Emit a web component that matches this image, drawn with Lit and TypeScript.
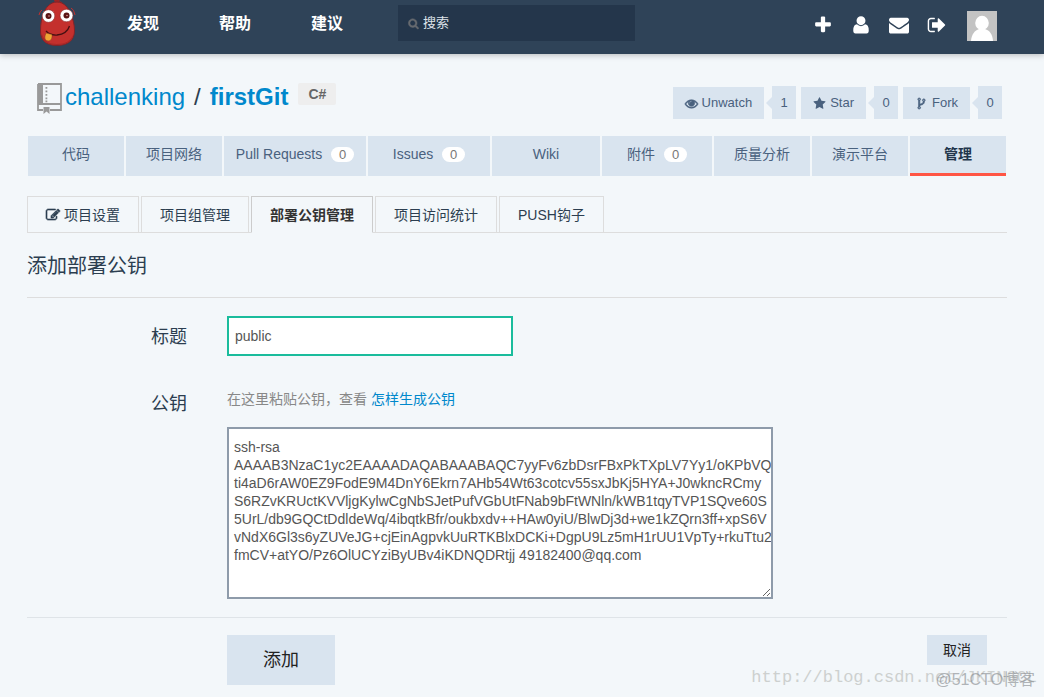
import { LitElement, html, css, svg } from "lit";
import { customElement, property, state } from "lit/decorators.js";
import { classMap } from "lit/directives/class-map.js";

const ICONS: Record<string, string> = {
  plus: "M1600 736v192q0 40-28 68t-68 28h-416v416q0 40-28 68t-68 28h-192q-40 0-68-28t-28-68v-416h-416q-40 0-68-28t-28-68v-192q0-40 28-68t68-28h416v-416q0-40 28-68t68-28h192q40 0 68 28t28 68v416h416q40 0 68 28t28 68z",
  user: "M1590 1399q0 255-200 255h-988q-200 0-200-255 0-300 90-440 80-112 240-122 150 160 364 160t364-160q160 10 240 122 90 140 90 440zM1296 512a400 400 0 0 1-800 0a400 400 0 0 1 800 0z",
  envelope: "M1792 710v794q0 66-47 113t-113 47h-1472q-66 0-113-47t-47-113v-794q44 49 101 87 362 246 497 345 57 42 92.5 65.5t94.5 48 110 24.5h2q51 0 110-24.5t94.5-48 92.5-65.5q170-123 498-345 57-39 100-87zm0-294q0 79-49 151t-122 123q-376 261-468 325-10 7-42.5 31t-54 38.5-52 32.5-57.5 27-50 9h-2q-23 0-50-9t-57.5-27-52-32.5-54-38.5-42.5-31q-91-64-262-182.5t-205-142.5q-62-42-117-115.5t-55-136.5q0-78 41.5-130t118.5-52h1472q65 0 112.5 47t47.5 113z",
  signOut: "M704 1440q0 4 1 20t.5 26.5-3 23.5-10 19.5-20.5 6.5h-320q-119 0-203.5-84.5t-84.5-203.5v-704q0-119 84.5-203.5t203.5-84.5h320q13 0 22.5 9.5t9.5 22.5q0 4 1 20t.5 26.5-3 23.5-10 19.5-20.5 6.5h-320q-66 0-113 47t-47 113v704q0 66 47 113t113 47h312l11.5 1 11.5 3 8 5.5 7 9 2 13.5zm928-544q0 26-19 45l-544 544q-19 19-45 19t-45-19-19-45v-288h-448q-26 0-45-19t-19-45v-384q0-26 19-45t45-19h448v-288q0-26 19-45t45-19 45 19l544 544q19 19 19 45z",
  star: "M1728 647q0 22-26 48l-363 354 86 500q1 7 1 20 0 21-10.5 35.5t-30.5 14.5q-19 0-40-12l-449-236-449 236q-22 12-40 12-21 0-31.5-14.5t-10.5-35.5q0-6 2-20l86-500-364-354q-25-27-25-48 0-37 56-46l502-73 225-455q19-41 49-41t49 41l225 455 502 73q56 9 56 46z",
  search: "M1216 832q0-185-131.5-316.5t-316.5-131.5-316.5 131.5-131.5 316.5 131.5 316.5 316.5 131.5 316.5-131.5 131.5-316.5zm512 832q0 52-38 90t-90 38q-54 0-90-38l-343-342q-179 124-399 124-143 0-273.5-55.5t-225-150-150-225-55.5-273.5 55.5-273.5 150-225 225-150 273.5-55.5 273.5 55.5 225 150 150 225 55.5 273.5q0 220-124 399l343 343q37 37 37 90z",
  eye: "M1664 960q-152-236-381-353 61 104 61 225 0 185-131.5 316.5t-316.5 131.5-316.5-131.5-131.5-316.5q0-121 61-225-229 117-381 353 133 205 333.5 326.5t434.5 121.5 434.5-121.5 333.5-326.5zm-720-384q0-20-14-34t-34-14q-125 0-214.5 89.5t-89.5 214.5q0 20 14 34t34 14 34-14 14-34q0-86 61-147t147-61q20 0 34-14t14-34zm848 384q0 34-20 69-140 230-376.5 368.5t-499.5 138.5-499.5-139-376.5-368q-20-35-20-69t20-69q140-229 376.5-368t499.5-139 499.5 139 376.5 368q20 35 20 69z",
  fork: "M672 1472q0-40-28-68t-68-28-68 28-28 68 28 68 68 28 68-28 28-68zm0-1152q0-40-28-68t-68-28-68 28-28 68 28 68 68 28 68-28 28-68zm640 128q0-40-28-68t-68-28-68 28-28 68 28 68 68 28 68-28 28-68zm96 0q0 52-26 96.5t-70 69.5q-2 287-226 414-67 38-203 81-128 40-169.5 71t-41.5 100v26q44 25 70 69.5t26 96.5q0 80-56 136t-136 56-136-56-56-136q0-52 26-96.5t70-69.5v-820q-44-25-70-69.5t-26-96.5q0-80 56-136t136-56 136 56 56 136q0 52-26 96.5t-70 69.5v497q54-26 154-57 55-17 87.5-29.5t70.5-31 59-39.5 40.5-51 28-69.5 8.5-91.5q-44-25-70-69.5t-26-96.5q0-80 56-136t136-56 136 56 56 136z",
  edit: "M888 1184l116-116-152-152-116 116v56h96v96h56zm440-720q-16-16-33 1l-350 350q-17 17-1 33t33-1l350-350q17-17 1-33zm80 594v190q0 119-84.5 203.5t-203.5 84.5h-832q-119 0-203.5-84.5t-84.5-203.5v-832q0-119 84.5-203.5t203.5-84.5h832q63 0 117 25 15 7 18 23 3 17-9 29l-49 49q-14 14-32 8-23-6-45-6h-832q-66 0-113 47t-47 113v832q0 66 47 113t113 47h832q66 0 113-47t47-113v-126q0-13 9-22l64-64q15-15 35-7t20 29zm-96-738l288 288-672 672h-288v-288zm444 132l-92 92-288-288 92-92q28-28 68-28t68 28l152 152q28 28 28 68t-28 68z",
};

@customElement("fa-icon")
class FaIcon extends LitElement {
  @property() name = "";
  static styles = css`
    :host { display: inline-block; width: 14px; height: 14px; flex: none; }
    svg { display: block; width: 100%; height: 100%; fill: currentColor; overflow: visible; }
    :host([heavy]) path { stroke: currentColor; stroke-width: 80; }
  `;
  render() {
    return html`<svg viewBox="0 0 1792 1792" aria-hidden="true">${svg`<path d=${ICONS[this.name]}></path>`}</svg>`;
  }
}

const NAV = ["发现", "帮助", "建议"];
const ACTIONS = [
  { icon: "eye", label: "Unwatch", count: 1 },
  { icon: "star", label: "Star", count: 0 },
  { icon: "fork", label: "Fork", count: 0 },
];
const TABS: { label: string; count?: number; active?: boolean }[] = [
  { label: "代码" },
  { label: "项目网络" },
  { label: "Pull Requests", count: 0 },
  { label: "Issues", count: 0 },
  { label: "Wiki" },
  { label: "附件", count: 0 },
  { label: "质量分析" },
  { label: "演示平台" },
  { label: "管理", active: true },
];
const SUBTABS: { label: string; icon?: string; active?: boolean }[] = [
  { label: "项目设置", icon: "edit" },
  { label: "项目组管理" },
  { label: "部署公钥管理", active: true },
  { label: "项目访问统计" },
  { label: "PUSH钩子" },
];
const KEY = [
  "ssh-rsa",
  "AAAAB3NzaC1yc2EAAAADAQABAAABAQC7yyFv6zbDsrFBxPkTXpLV7Yy1/oKPbVQ",
  "ti4aD6rAW0EZ9FodE9M4DnY6Ekrn7AHb54Wt63cotcv55sxJbKj5HYA+J0wkncRCmy",
  "S6RZvKRUctKVVljgKylwCgNbSJetPufVGbUtFNab9bFtWNln/kWB1tqyTVP1SQve60S",
  "5UrL/db9GQCtDdldeWq/4ibqtkBfr/oukbxdv++HAw0yiU/BlwDj3d+we1kZQrn3ff+xpS6V",
  "vNdX6Gl3s6yZUVeJG+cjEinAgpvkUuRTKBlxDCKi+DgpU9Lz5mH1rUU1VpTy+rkuTtu2",
  "fmCV+atYO/Pz6OlUCYziByUBv4iKDNQDRtjj 49182400@qq.com",
].join("\n");

@customElement("app-root")
class AppRoot extends LitElement {
  @state() keyTitle = "public";

  static styles = css`
    :host {
      display: block;
      position: relative;
      min-height: 100vh;
      background: #f3f7fa;
      color: #2c3e50;
      font: 14px/20px "Liberation Sans", "Noto Sans CJK SC", sans-serif;
    }
    * { box-sizing: border-box; }
    a { color: inherit; text-decoration: none; }
    input, textarea, button { font: inherit; color: inherit; border-radius: 0; margin: 0; }

    .top {
      display: flex;
      height: 54px;
      padding: 0 47px 0 37px;
      background: #2f4358;
      box-shadow: 0 1px 6px rgba(0, 0, 0, 0.25);
      color: #fff;
    }
    .logo { width: 40px; height: 48px; display: block; }
    .nav { display: flex; gap: 60px; margin: 14px 55px 0 50px; font-size: 16px; font-weight: bold; }
    .search {
      flex: 0 1 237px;
      height: 36px;
      margin-top: 5px;
      padding-left: 10px;
      display: flex;
      align-items: center;
      gap: 3px;
      background: #24364b;
    }
    .search fa-icon { width: 11px; height: 11px; margin-right: 1px; color: #666a70; }
    .search input { flex: 1; min-width: 0; border: 0; padding: 0; background: none; outline: none; font-size: 13px; }
    .search input::placeholder { color: #dde3e9; opacity: 1; }
    .tools { display: flex; gap: 18px; margin: 15px 0 0 auto; }
    .tools fa-icon { display: block; width: 20px; height: 20px; }
    .avatar { display: block; width: 30px; height: 30px; margin: 11px 0 0 20px; }

    .page { padding: 32px 37px 12px 27px; }
    .head { display: flex; align-items: flex-start; height: 50px; padding: 0 5px 0 10px; }
    .book { width: 25px; height: 32px; margin-top: -4px; flex: none; }
    .repo { display: flex; gap: 9px; margin: -5px 0 0 3px; font-size: 24px; line-height: 32px; font-weight: normal; white-space: nowrap; }
    .repo a { color: #0088cc; }
    .repo .own { font-weight: bold; }
    .lang { margin: -3px 0 0 10px; padding: 0 10px; line-height: 22px; font-size: 14px; font-weight: bold; color: #666; background: #eee; border-radius: 2px; }
    .actions { display: flex; gap: 5px; margin-left: auto; font-size: 13px; color: #49617e; }
    .action { display: flex; align-items: flex-end; }
    .act { display: flex; align-items: center; gap: 4px; height: 32px; padding: 0 12px; border: 0; background: #d9e4ef; }
    .act fa-icon { width: 13px; height: 13px; }
    .arrow { width: 0; height: 0; margin: 0 0 10px 2px; border: 6px solid transparent; border-right-color: #d9e4ef; border-left: 0; }
    .num { width: 24px; line-height: 33px; text-align: center; background: #d9e4ef; }

    .tabs {
      display: grid;
      grid-template-columns: 96fr 96fr 142fr 122fr 108fr 110fr 96fr 96fr 96fr;
      gap: 2px;
      padding: 0 1px;
      color: #49617e;
    }
    .tab { display: flex; align-items: center; justify-content: center; gap: 9px; height: 40px; padding-bottom: 4px; background: #d9e4ef; white-space: nowrap; }
    .tab.active { padding-bottom: 1px; border-bottom: 3px solid #ff5544; color: #22364c; font-weight: bold; }
    .pill { width: 23px; line-height: 15px; border-radius: 8px; text-align: center; background: #fff; color: #777; font-size: 13px; }

    .subtabs { display: flex; gap: 2px; margin-top: 20px; box-shadow: inset 0 -1px #dddddd; }
    .sub { display: flex; align-items: center; gap: 4px; height: 37px; padding: 0 18px; border: 1px solid #dddddd; white-space: nowrap; }
    .sub.active { border-color: #cccccc; border-bottom-color: #f3f7fa; color: #333; font-weight: bold; }

    h2 { margin: 0; padding: 18px 0 15px; font-size: 20px; line-height: 31px; font-weight: normal; border-bottom: 1px solid #dddddd; }
    .row { display: grid; grid-template-columns: 160px minmax(0, 1fr); column-gap: 40px; }
    .row label { font-size: 18px; line-height: 42px; text-align: right; }
    .title-row { padding: 18px 0 28px; }
    .title-row input { width: 286px; height: 40px; padding: 0 6px; border: 2px solid #1abc9c; background: #fff; color: #555; outline: none; }
    .key-row { padding-bottom: 18px; border-bottom: 1px solid #dfe4e8; }
    .key-row label { line-height: 36px; }
    .hint { margin: 3px 0 18px; color: #888; }
    .hint a { color: #0088cc; }
    textarea {
      display: block;
      width: 546px;
      max-width: 100%;
      height: 172px;
      padding: 9px 0 9px 5px;
      border: 2px solid #8e9baa;
      background: #fff;
      color: #555;
      line-height: 18px;
      white-space: pre;
      overflow: hidden;
      resize: both;
      outline: none;
    }
    .foot { display: flex; align-items: flex-start; justify-content: space-between; padding: 17px 20px 0 200px; }
    .foot button { border: 0; background: #d9e4ef; color: #222; }
    .foot .add { width: 108px; height: 50px; font-size: 18px; }
    .foot .cancel { width: 60px; height: 30px; }
    .mark { position: absolute; white-space: nowrap; pointer-events: none; }
    .mark.url { right: 7px; bottom: 9px; font-family: "Liberation Mono", monospace; font-size: 17px; line-height: 20px; color: #cdd0cf; }
    .mark.site { right: 9px; bottom: 7px; font-size: 16px; color: rgba(130, 134, 138, 0.6); }
  `;

  render() {
    return html`
      <header class="top">
        <a href="#" aria-label="首页">
          <svg class="logo" viewBox="0 0 40 48">
            <path d="M19.500 5 L19 1 L17.500 0 M21 5 L21.500 0 M22 5 L24.500 2" stroke="#9e2524" stroke-width="2.500" fill="none" />
            <path d="M20 2 C27 2 32 8 34 15 C36 19 37.500 24 37.500 31 C37.500 40 31 45.500 20 45.500 C9 45.500 3.500 40 3.500 31 C3.500 24 4.500 19 6 15 C8 8 13 2 20 2Z" fill="#c4302d" stroke="#7f2429" stroke-width="1" />
            <path d="M5 34 C7 41 12 44 20 44 C28 44 34 41 36.500 34 C36 41 30 45 20 45 C10 45 4 41 5 34Z" fill="#a92827" />
            <path d="M2 15 Q3 11 5 10 M38 15 Q37 9 34 8" stroke="#c4302d" stroke-width="1" fill="none" />
            <ellipse cx="11.500" cy="16" rx="6.300" ry="6.300" fill="#fff" stroke="#8b2a2a" stroke-width=".6" />
            <ellipse cx="29.500" cy="15.500" rx="6.500" ry="6.300" fill="#fff" stroke="#8b2a2a" stroke-width=".6" />
            <circle cx="11.500" cy="16" r="3" fill="#5a1515" /><circle cx="29.500" cy="15.500" r="3" fill="#5a1515" />
            <circle cx="12" cy="16" r=".8" fill="#d99" /><circle cx="30" cy="15.500" r=".8" fill="#d99" />
            <path d="M9 31 Q13 35.500 20 35 Q30 34 32.500 26" stroke="#461012" stroke-width="1.300" fill="none" />
            <path d="M9 33 L15 34.500 Q15.500 40 12 41 Q7 41 8 36Z" fill="#efa535" stroke="#8a3c1c" stroke-width=".5" />
          </svg>
        </a>
        <nav class="nav">${NAV.map((n) => html`<a href="#">${n}</a>`)}</nav>
        <div class="search">
          <fa-icon name="search" heavy></fa-icon>
          <input type="search" placeholder="搜索" aria-label="搜索" />
        </div>
        <div class="tools">
          ${[["plus", "新建"], ["user", "用户"], ["envelope", "消息"], ["signOut", "退出"]].map(
            ([i, t]) => html`<a href="#" aria-label=${t}><fa-icon name=${i}></fa-icon></a>`
          )}
        </div>
        <a href="#" aria-label="头像">
          <svg class="avatar" viewBox="0 0 30 30">
            <rect width="30" height="30" fill="#c3c3c3" />
            <ellipse cx="15" cy="12" rx="6.800" ry="7.200" fill="#fff" />
            <path d="M4 30 C4.500 23 8 19.500 12 18 H18 C22.500 19.500 25.500 23 26 30Z" fill="#fff" />
          </svg>
        </a>
      </header>
      <main class="page">
        <div class="head">
          <svg class="book" viewBox="0 0 25 32" aria-hidden="true">
            <path d="M1 2H24V28H13M6 28H1V2M1 22H24" fill="none" stroke="#999" stroke-width="1.800" />
            <path d="M1 2H6V22H1ZM6.500 25H12.500V32L9.500 29.500L6.500 32Z" fill="#999" />
            <path d="M8.500 5h1.800v1.800h-1.800zM8.500 8.500h1.800v1.800h-1.800zM8.500 12h1.800v1.800h-1.800zM8.500 15.500h1.800v1.800h-1.800zM8.500 18.500h1.800v1.800h-1.800z" fill="#999" />
          </svg>
          <div class="repo"><a href="#">challenking</a><span>/</span><a class="own" href="#">firstGit</a></div>
          <span class="lang">C#</span>
          <div class="actions">
            ${ACTIONS.map(
              (a) => html`<div class="action">
                <button class="act"><fa-icon name=${a.icon} ?heavy=${a.icon !== "star"}></fa-icon>${a.label}</button>
                <span class="arrow"></span>
                <a class="num" href="#">${a.count}</a>
              </div>`
            )}
          </div>
        </div>
        <nav class="tabs">
          ${TABS.map(
            (t) => html`<a href="#" class=${classMap({ tab: true, active: !!t.active })}
              ><span>${t.label}</span>${t.count !== undefined ? html`<span class="pill">${t.count}</span>` : ""}</a>`
          )}
        </nav>
        <nav class="subtabs">
          ${SUBTABS.map(
            (t) => html`<a href="#" class=${classMap({ sub: true, active: !!t.active })}
              >${t.icon ? html`<fa-icon name=${t.icon} heavy></fa-icon>` : ""}<span>${t.label}</span></a>`
          )}
        </nav>
        <h2>添加部署公钥</h2>
        <form @submit=${(e: Event) => e.preventDefault()}>
          <div class="row title-row">
            <label for="title">标题</label>
            <input id="title" type="text" .value=${this.keyTitle}
              @input=${(e: Event) => (this.keyTitle = (e.target as HTMLInputElement).value)} />
          </div>
          <div class="row key-row">
            <label for="key">公钥</label>
            <div>
              <p class="hint">在这里粘贴公钥，查看 <a href="#">怎样生成公钥</a></p>
              <textarea id="key" spellcheck="false" .value=${KEY}></textarea>
            </div>
          </div>
          <div class="foot">
            <button class="add" type="submit">添加</button>
            <button class="cancel" type="button">取消</button>
          </div>
        </form>
      </main>
      <span class="mark url">http://blog.csdn.net/JKINGCL</span>
      <span class="mark site">@51CTO博客</span>
    `;
  }
}
